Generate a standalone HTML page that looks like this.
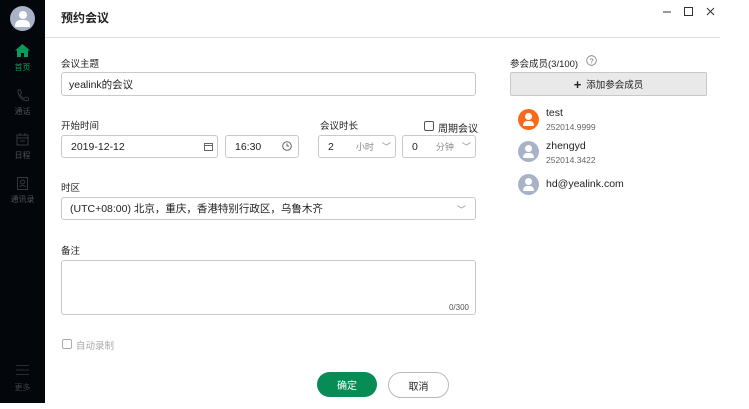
<!DOCTYPE html>
<html><head><meta charset="utf-8"><style>
*{margin:0;padding:0;box-sizing:border-box}
body{width:749px;height:409px;background:#fff;font-family:"Liberation Sans","Noto Sans CJK SC",sans-serif;font-size:10px;color:#222;position:relative;overflow:hidden}
.a{position:absolute}
.side{left:0;top:0;width:45px;height:403px;background:#03060a}
.nav{position:absolute;left:0;width:45px;text-align:center;font-size:8px;color:#4f5257}
.box{position:absolute;border:1px solid #c9c9c9;border-radius:3px;background:#fff;font-size:10.5px;display:flex;align-items:center;padding-left:9px;color:#222}
.lbl{position:absolute;font-size:9.5px;color:#222}
.gray{color:#888;font-size:9px}
.av{position:absolute;left:518px;width:21px;height:21px;border-radius:50%;background:#a9b3c8}
.chk{position:absolute;width:10px;height:10px;border:1px solid #555;border-radius:2px;background:#fff}
</style></head><body>
<div class="a side"></div>
<div class="a" style="left:10px;top:6px;width:25px;height:25px;border-radius:50%;background:#a8b3c8;overflow:hidden">
<div class="a" style="left:8.5px;top:5px;width:8px;height:8px;border-radius:50%;background:#fff"></div>
<div class="a" style="left:5px;top:14px;width:15px;height:7px;border-radius:7px 7px 2px 2px;background:#fff"></div></div>
<svg class="a" style="left:15px;top:44px" width="15" height="13" viewBox="0 0 15 13"><path d="M7.5 0L0 6.5h2V13h4V9h3v4h4V6.5h2z" fill="#0a9a5c"/></svg>
<div class="nav" style="top:62px;color:#0a9a5c">首页</div>
<svg class="a" style="left:16px;top:89px" width="13" height="13" viewBox="0 0 13 13"><path d="M2 1l2.5 0 1 3-1.5 1.5c1 2 2 3 4 4L9.5 8l3 1v2.5c-6 1-11-4.5-10.5-10.5z" fill="none" stroke="#35383d" stroke-width="0.9"/></svg>
<div class="nav" style="top:106px">通话</div>
<svg class="a" style="left:16px;top:133px" width="13" height="13" viewBox="0 0 13 13"><rect x="1" y="2" width="11" height="10" fill="none" stroke="#35383d"/><path d="M1 5h11M4 0v3M9 0v3M4 8h5" stroke="#35383d"/></svg>
<div class="nav" style="top:150px">日程</div>
<svg class="a" style="left:16px;top:177px" width="13" height="13" viewBox="0 0 13 13"><rect x="1.5" y="0.5" width="10" height="12" fill="none" stroke="#35383d"/><circle cx="6.5" cy="5" r="2" fill="none" stroke="#35383d"/><path d="M3.5 10c1-2 5-2 6 0" fill="none" stroke="#35383d"/></svg>
<div class="nav" style="top:194px">通讯录</div>
<svg class="a" style="left:16px;top:365px" width="13" height="10"><path d="M0 .5h13M0 5h13M0 9.5h13" stroke="#2a2d32"/></svg>
<div class="nav" style="top:382px;color:#3f4247">更多</div>

<div class="a" style="left:61px;top:9px;font-size:12px;font-weight:bold">预约会议</div>
<svg class="a" style="left:660px;top:6px" width="60" height="12"><path d="M3 6h8" stroke="#333"/><rect x="24.5" y="1.5" width="8" height="8" fill="none" stroke="#333"/><path d="M47 2l7 7M54 2l-7 7" stroke="#333"/></svg>
<div class="a" style="left:45px;top:37px;width:675px;height:1px;background:#ddd"></div>

<div class="lbl" style="left:61px;top:56px">会议主题</div>
<div class="box" style="left:61px;top:72px;width:415px;height:24px;padding-left:7px">yealink的会议</div>
<div class="lbl" style="left:61px;top:118px">开始时间</div>
<div class="box" style="left:61px;top:135px;width:157px;height:23px">2019-12-12<svg class="a" style="left:142px;top:6px" width="9" height="9"><rect x=".5" y="1.5" width="8" height="7" fill="none" stroke="#666"/><path d="M.5 3.5h8" stroke="#666"/></svg></div>
<div class="box" style="left:225px;top:135px;width:74px;height:23px">16:30<svg class="a" style="left:56px;top:5px" width="10" height="10"><circle cx="5" cy="5" r="4.3" fill="none" stroke="#666"/><path d="M5 2.5V5h2" fill="none" stroke="#666"/></svg></div>
<div class="lbl" style="left:320px;top:118px">会议时长</div>
<div class="chk" style="left:424px;top:121px"></div>
<div class="lbl" style="left:438px;top:120px;font-size:10px">周期会议</div>
<div class="box" style="left:318px;top:135px;width:78px;height:23px">2<span class="gray" style="margin-left:22px">小时</span><span class="gray" style="margin-left:8px">﹀</span></div>
<div class="box" style="left:402px;top:135px;width:74px;height:23px">0<span class="gray" style="margin-left:18px">分钟</span><span class="gray" style="margin-left:8px">﹀</span></div>
<div class="lbl" style="left:61px;top:180px">时区</div>
<div class="box" style="left:61px;top:197px;width:415px;height:23px;padding-left:8px">(UTC+08:00) 北京，重庆，香港特别行政区，乌鲁木齐<span class="gray a" style="left:395px;top:5px">﹀</span></div>
<div class="lbl" style="left:61px;top:243px">备注</div>
<div class="box" style="left:61px;top:260px;width:415px;height:55px"><span class="a" style="right:6px;bottom:2px;font-size:8px;color:#555">0/300</span></div>
<div class="chk" style="left:62px;top:339px;border-color:#aaa"></div>
<div class="lbl" style="left:76px;top:338px;color:#aaa">自动录制</div>
<div class="a" style="left:317px;top:372px;width:60px;height:25px;border-radius:13px;background:#078c55;color:#fff;display:flex;align-items:center;justify-content:center;font-size:10px">确定</div>
<div class="a" style="left:388px;top:372px;width:61px;height:26px;border-radius:13px;border:1px solid #bbb;display:flex;align-items:center;justify-content:center;font-size:10px">取消</div>

<div class="lbl" style="left:510px;top:56px">参会成员(3/100)</div>
<svg class="a" style="left:586px;top:55px" width="11" height="11"><circle cx="5.5" cy="5.5" r="4.8" fill="none" stroke="#777" stroke-width=".8"/><text x="5.5" y="8.3" font-size="7.5" text-anchor="middle" fill="#777" font-family="Liberation Sans">?</text></svg>
<div class="a" style="left:510px;top:72px;width:197px;height:24px;background:#e9e9e9;border:1px solid #c8c8c8;border-radius:2px;display:flex;align-items:center;justify-content:center;font-size:9.5px"><b style="font-size:13px;margin-right:5px">+</b>添加参会成员</div>

<div class="av" style="top:109px;background:#fa6a1a"></div>
<div class="a" style="left:546px;top:107px;font-size:10.5px">test</div>
<div class="a gray" style="left:546px;top:122px;font-size:8.5px;color:#666">252014.9999</div>
<div class="av" style="top:141px"></div>
<div class="a" style="left:546px;top:140px;font-size:10.5px">zhengyd</div>
<div class="a gray" style="left:546px;top:155px;font-size:8.5px;color:#666">252014.3422</div>
<div class="av" style="top:174px"></div>
<div class="a" style="left:546px;top:178px;font-size:10.5px">hd@yealink.com</div>
<style>.av::before{content:"";position:absolute;left:7px;top:4px;width:7px;height:7px;border-radius:50%;background:#fff}.av::after{content:"";position:absolute;left:5px;top:12px;width:11px;height:5px;border-radius:5px 5px 1px 1px;background:#fff}</style>
</body></html>
